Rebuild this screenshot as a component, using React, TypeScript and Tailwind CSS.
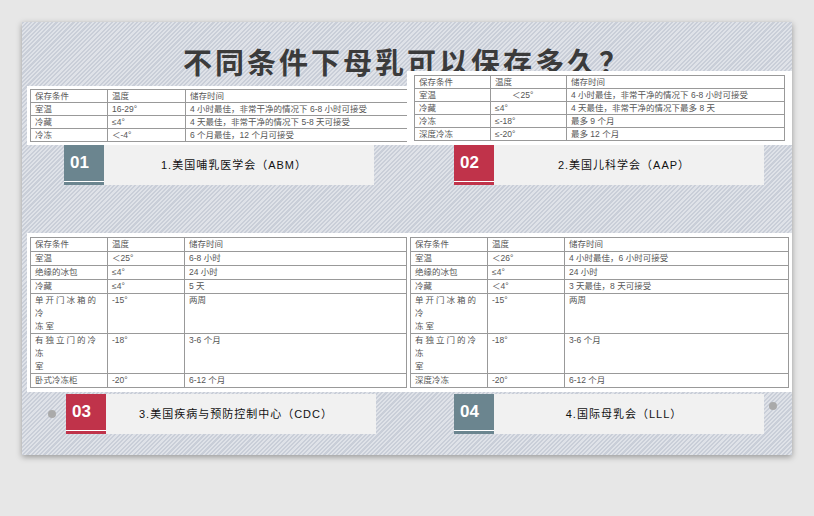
import React from "react";

type Row = [React.ReactNode, string, string];
const font = { fontFamily: '"Liberation Sans","Noto Sans CJK SC",sans-serif' };

function Table({ rows, w1, w2, lh }: { rows: Row[]; w1: number; w2: number; lh: string }) {
  return (
    <table className={`w-full border-collapse text-[8.5px] text-[#555] ${lh}`}>
      <tbody>
        {[["保存条件", "温度", "储存时间"] as Row, ...rows].map((r, i) => (
          <tr key={i}>
            <td className="border border-[#999] px-[4px] align-top" style={{ width: w1 }}>{r[0]}</td>
            <td className="border border-[#999] px-[4px] align-top" style={{ width: w2 }}>{r[1]}</td>
            <td className="border border-[#999] px-[4px] align-top">{r[2]}</td>
          </tr>
        ))}
      </tbody>
    </table>
  );
}

function Label({ num, text, red }: { num: string; text: string; red?: boolean }) {
  return (
    <div className="flex h-[40px] w-[310px] bg-[#f1f1f1]">
      <div className={`flex w-[40px] flex-col ${red ? "bg-[#c0334a]" : "bg-[#6b858f]"}`}>
        <div className="flex flex-1 items-center pl-[6px] text-[17px] font-bold text-white">{num}</div>
        <div className="mb-[3px] h-[1px] bg-white" />
      </div>
      <div className="flex flex-1 items-center justify-center pr-[10px] text-[11px] tracking-[1px] text-[#111]">{text}</div>
    </div>
  );
}

const W = ({ a, b }: { a: string; b: string }) => (
  <span className="tracking-[2px]">{a}<br />{b}</span>
);

const stripe = "bg-[repeating-linear-gradient(135deg,#c9ced8_0px,#c9ced8_1.5px,#dfe2e8_1.5px,#dfe2e8_3px)]";

export default function App() {
  return (
    <div className="h-[516px] w-[814px] overflow-hidden bg-[#e7e7e7] pl-[22px] pt-[22px]" style={font}>
      <div className={`relative h-[433px] w-[770px] shadow-[0_2px_6px_rgba(0,0,0,0.35)] ${stripe}`}>
        <div className="pt-[22px] text-center text-[29px] font-bold leading-[40px] tracking-[3px] text-[#3b3b3b]">不同条件下母乳可以保存多久？</div>

        <div className="mt-[-13px] grid grid-cols-[385px_385px] items-end">
          <div className="flex flex-col pl-[5px]">
            <div className="w-[386px] bg-white p-[3px]">
              <Table lh="leading-[12px]" w1={77} w2={78} rows={[["室温", "16-29°", "4 小时最佳，非常干净的情况下 6-8 小时可接受"], ["冷藏", "≤4°", "4 天最佳，非常干净的情况下 5-8 天可接受"], ["冷冻", "＜-4°", "6 个月最佳，12 个月可接受"]]} />
            </div>
            <div className="ml-[37px]"><Label num="01" text="1.美国哺乳医学会（ABM）" /></div>
          </div>
          <div className="flex flex-col">
            <div className="bg-white px-[7px] py-[4px]">
              <Table lh="leading-[12px]" w1={76} w2={76} rows={[["室温", "　　＜25°", "4 小时最佳，非常干净的情况下 6-8 小时可接受"], ["冷藏", "≤4°", "4 天最佳，非常干净的情况下最多 8 天"], ["冷冻", "≤-18°", "最多 9 个月"], ["深度冷冻", "≤-20°", "最多 12 个月"]]} />
            </div>
            <div className="ml-[47px]"><Label num="02" text="2.美国儿科学会（AAP）" red /></div>
          </div>
        </div>

        <div className="mt-[48px] grid grid-cols-[385px_385px] items-start">
          <div className="flex flex-col pl-[5px]">
            <div className="w-[383px] bg-white px-[3px] py-[4px]">
              <Table lh="leading-[13px]" w1={77} w2={77} rows={[["室温", "＜25°", "6-8 小时"], ["绝缘的冰包", "≤4°", "24 小时"], ["冷藏", "≤4°", "5 天"], [<W a="单开门冰箱的冷" b="冻室" />, "-15°", "两周"], [<W a="有独立门的冷冻" b="室" />, "-18°", "3-6 个月"], ["卧式冷冻柜", "-20°", "6-12 个月"]]} />
            </div>
            <div className="mt-[2px] flex items-center gap-[10px] pl-[21px]">
              <div className="h-[8px] w-[8px] rounded-full bg-[#aaa]" />
              <Label num="03" text="3.美国疾病与预防控制中心（CDC）" red />
            </div>
          </div>
          <div className="flex flex-col">
            <div className="bg-white px-[3px] py-[4px]">
              <Table lh="leading-[13px]" w1={77} w2={77} rows={[["室温", "＜26°", "4 小时最佳，6 小时可接受"], ["绝缘的冰包", "≤4°", "24 小时"], ["冷藏", "＜4°", "3 天最佳，8 天可接受"], [<W a="单开门冰箱的冷" b="冻室" />, "-15°", "两周"], [<W a="有独立门的冷冻" b="室" />, "-18°", "3-6 个月"], ["深度冷冻", "-20°", "6-12 个月"]]} />
            </div>
            <div className="mt-[2px] flex items-start gap-[5px] pl-[47px]">
              <Label num="04" text="4.国际母乳会（LLL）" />
              <div className="mt-[8px] h-[8px] w-[8px] rounded-full bg-[#aaa]" />
            </div>
          </div>
        </div>
      </div>
    </div>
  );
}
